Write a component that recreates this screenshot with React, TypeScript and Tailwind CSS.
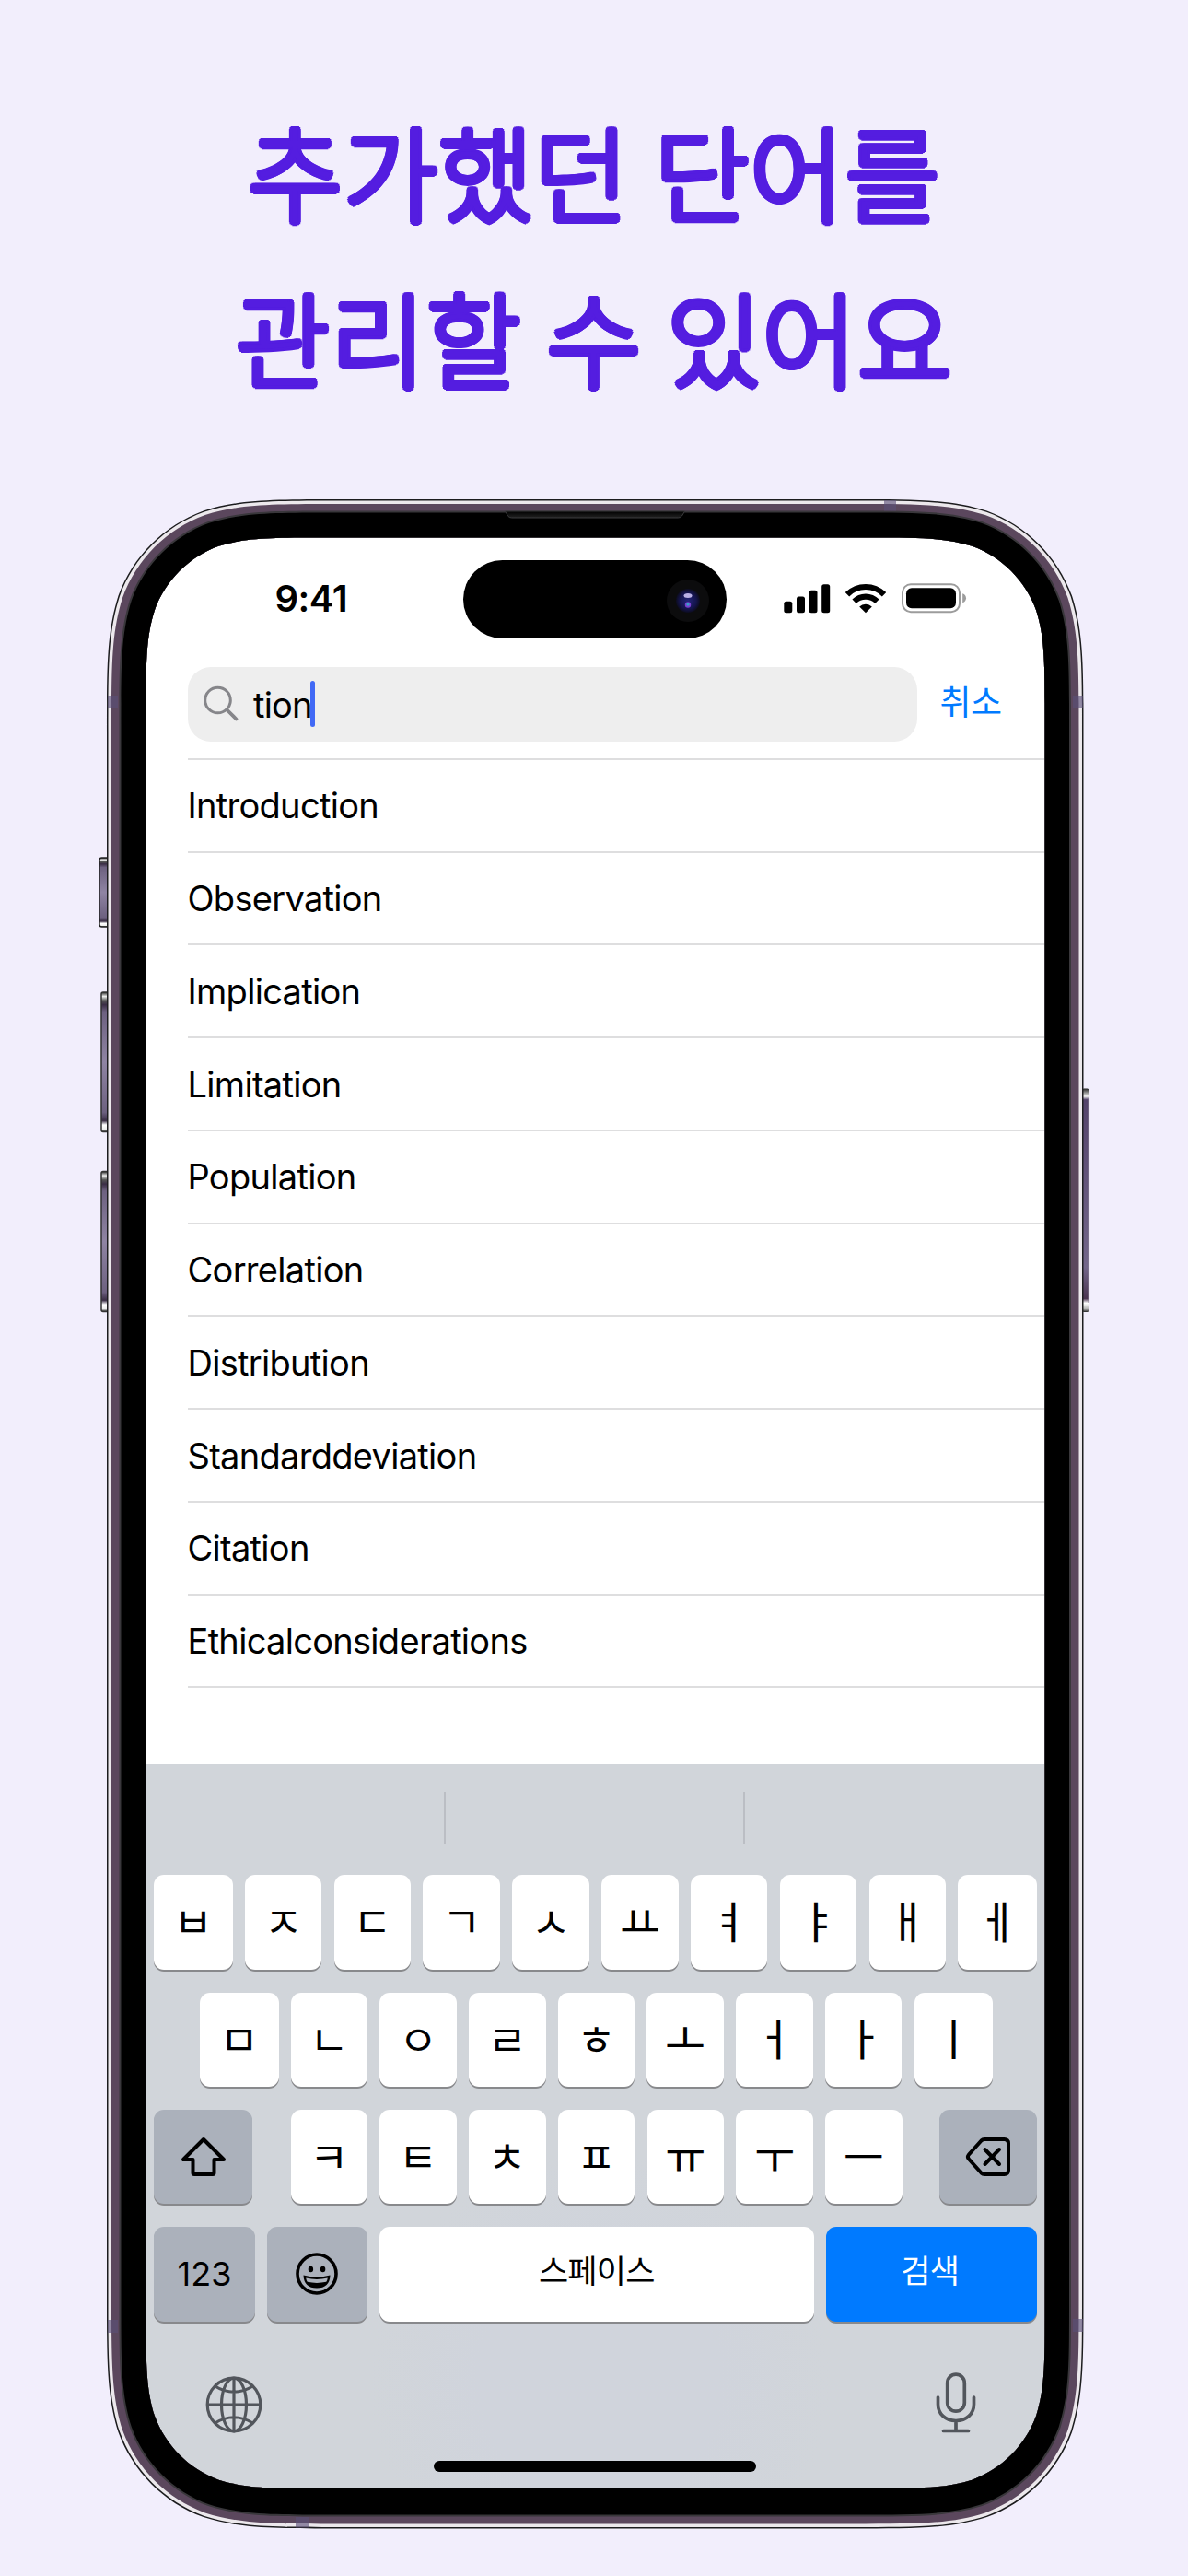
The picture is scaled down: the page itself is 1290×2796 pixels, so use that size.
import type { ReactNode } from "react";

const WORDS = [
  "Introduction",
  "Observation",
  "Implication",
  "Limitation",
  "Population",
  "Correlation",
  "Distribution",
  "Standarddeviation",
  "Citation",
  "Ethicalconsiderations",
];

/** Rounded rectangle with continuous corners. */
function squircle(x: number, y: number, w: number, h: number, r: number) {
  const a = 1.528665 * r;
  const b = 1.08849296 * r;
  const c = 0.86840694 * r;
  const d = 0.63149379 * r;
  const e = 0.07491139 * r;
  const f = 0.37282383 * r;
  const g = 0.16905956 * r;
  const R = x + w;
  const B = y + h;
  return [
    `M${x + a} ${y}H${R - a}`,
    `C${R - b} ${y} ${R - c} ${y} ${R - d} ${y + e}`,
    `C${R - f} ${y + g} ${R - g} ${y + f} ${R - e} ${y + d}`,
    `C${R} ${y + c} ${R} ${y + b} ${R} ${y + a}V${B - a}`,
    `C${R} ${B - b} ${R} ${B - c} ${R - e} ${B - d}`,
    `C${R - g} ${B - f} ${R - f} ${B - g} ${R - d} ${B - e}`,
    `C${R - c} ${B} ${R - b} ${B} ${R - a} ${B}H${x + a}`,
    `C${x + b} ${B} ${x + c} ${B} ${x + d} ${B - e}`,
    `C${x + f} ${B - g} ${x + g} ${B - f} ${x + e} ${B - d}`,
    `C${x} ${B - c} ${x} ${B - b} ${x} ${B - a}V${y + a}`,
    `C${x} ${y + b} ${x} ${y + c} ${x + e} ${y + d}`,
    `C${x + g} ${y + f} ${x + f} ${y + g} ${x + d} ${y + e}`,
    `C${x + c} ${y} ${x + b} ${y} ${x + a} ${y}Z`,
  ].join("");
}

const hole = squircle(42.5, 41.5, 976, 2117.5, 125);

function Bezel() {
  return (
    <svg
      className="pointer-events-none absolute inset-0 overflow-visible"
      width="1060"
      height="2203"
      viewBox="0 0 1060 2203"
      fillRule="evenodd"
    >
      <defs>
        <linearGradient id="side" x1="0" y1="0" x2="0" y2="1">
          <stop offset="0" stopColor="#222" />
          <stop offset="0.03" stopColor="#eee" />
          <stop offset="0.06" stopColor="#555" />
          <stop offset="0.09" stopColor="#3a2d45" />
          <stop offset="0.14" stopColor="#6d6180" />
          <stop offset="0.5" stopColor="#8f84a3" />
          <stop offset="0.86" stopColor="#6d6180" />
          <stop offset="0.92" stopColor="#3a2d45" />
          <stop offset="0.95" stopColor="#fff" />
          <stop offset="0.98" stopColor="#eee" />
          <stop offset="1" stopColor="#222" />
        </linearGradient>
        <linearGradient id="power" x1="0" y1="0" x2="0" y2="1">
          <stop offset="0" stopColor="#222" />
          <stop offset="0.02" stopColor="#999" />
          <stop offset="0.035" stopColor="#f4f4f4" />
          <stop offset="0.05" stopColor="#54436b" />
          <stop offset="0.8" stopColor="#73668a" />
          <stop offset="0.94" stopColor="#4a3350" />
          <stop offset="0.96" stopColor="#fff" />
          <stop offset="0.985" stopColor="#bbb" />
          <stop offset="1" stopColor="#222" />
        </linearGradient>
        <linearGradient id="ear" x1="0" y1="0" x2="0" y2="1">
          <stop offset="0" stopColor="#000" />
          <stop offset="1" stopColor="#222" />
        </linearGradient>
      </defs>
      <rect x="-8" y="389" width="11" height="75" rx="2.5" fill="url(#side)" stroke="#222" strokeWidth="1.5" />
      <rect x="-6" y="535" width="8" height="151.500" rx="2" fill="url(#side)" stroke="#333" strokeWidth="1.5" />
      <rect x="-6" y="729.500" width="8" height="152" rx="2" fill="url(#side)" stroke="#333" strokeWidth="1.500" />
      <rect x="1059" y="639.500" width="7.500" height="242.500" rx="2" fill="url(#power)" />
      <path d="M1066.300 650V872" stroke="#8d8796" strokeWidth="1.500" />
      <path d={squircle(0, 0, 1060.5, 2202.500, 166) + hole} fill="#1c1c1e" />
      <path d={squircle(1.5, 1.5, 1057.500, 2199.500, 164.500) + hole} fill="#ece8ec" />
      <path d={squircle(5, 5, 1050.500, 2192.500, 161) + hole} fill="#5b475d" />
      <path d={squircle(13.5, 12.5, 1033.500, 2177, 153) + hole} fill="#39373b" />
      <path d={squircle(15.5, 14.5, 1029.500, 2173, 151) + hole} fill="#000" />
      <path d="M432.500 13l3 5q1.500 2 4 2h181q2.500 0 4-2l3-5z" fill="url(#ear)" stroke="#3a3a3c" strokeWidth="1" />
      <g fill="#5a4f78" fillOpacity="0.62">
        <rect x="844" y="1" width="13" height="11.500" />
        <rect x="205" y="2190" width="14" height="11.500" />
        <rect x="1" y="213" width="11" height="13" />
        <rect x="1049" y="213" width="11" height="13" />
        <rect x="1" y="1976" width="11" height="14" />
        <rect x="1049" y="1975" width="11" height="14" />
      </g>
    </svg>
  );
}

function StatusBar() {
  return (
    <div className="relative flex h-[140.500px] items-start">
      <div className="ml-[140px] mt-[41.500px] w-[80px] text-[40px] font-semibold leading-[50px] tracking-[-0.5px]">
        9:41
      </div>
      <div className="ml-[124.500px] mt-[24px] flex h-[85px] w-[286px] items-center justify-end rounded-full bg-black pr-[19px]">
        <svg width="46" height="46" viewBox="-23 -23 46 46" className="mt-[3px]">
          <defs>
            <radialGradient id="lens">
              <stop offset="0" stopColor="#24247a" />
              <stop offset="0.7" stopColor="#14144c" />
              <stop offset="1" stopColor="#0c0c1e" />
            </radialGradient>
          </defs>
          <circle r="23" fill="#0c0c0d" />
          <circle r="13" fill="url(#lens)" />
          <ellipse cy="-5.500" rx="4.500" ry="2.500" fill="#b9b0e6" />
          <circle cy="4.500" r="3.200" fill="#7a3fd0" />
          <circle cy="4" r="1.700" fill="#38a0c8" />
        </svg>
      </div>
      <svg className="ml-[62px] mt-[50px]" width="51" height="32" viewBox="0 0 51 32">
        <rect x="0.300" y="18.800" width="9" height="12.500" rx="2.500" />
        <rect x="14" y="13.500" width="9" height="17.800" rx="2.500" />
        <rect x="27.500" y="6.800" width="9" height="24.500" rx="2.500" />
        <rect x="41.200" y="0.200" width="9" height="31.100" rx="2.500" />
      </svg>
      <svg className="ml-[16px] mt-[49px]" width="44" height="33" viewBox="0 0 44 33">
        <g fill="none" stroke="#000">
          <path d="M2 12.200A28.500 28.500 0 0 1 42 12.200" strokeWidth="6.200" />
          <path d="M9.600 19.800A17.600 17.600 0 0 1 34.400 19.800" strokeWidth="6.200" />
        </g>
        <path d="M22 32.200l-6.800-6.800a9.800 9.800 0 0 1 13.600 0z" />
      </svg>
      <svg className="ml-[17px] mt-[49px]" width="72" height="33" viewBox="0 0 72 33">
        <rect x="1" y="1.200" width="62" height="30" rx="9" fill="none" stroke="#9c9c9c" strokeWidth="2" />
        <rect x="5" y="5.200" width="54" height="22" rx="6" />
        <path d="M66.200 11.200c2.600.8 3.800 2.800 3.800 5s-1.200 4.200-3.800 5z" fill="#9c9c9c" />
      </svg>
    </div>
  );
}

function SearchBar() {
  return (
    <div className="flex h-[99px] items-start pl-[45px]">
      <div className="flex h-[81px] w-[792.500px] items-center rounded-[25px] bg-[#eeeeee] pl-[16px]">
        <svg width="40" height="40" viewBox="0 0 40 40" fill="none" stroke="#86868a" strokeLinecap="round">
          <circle cx="16.500" cy="16" r="13.800" strokeWidth="3" />
          <path d="M26.500 26.500L36.500 36.500" strokeWidth="3.800" />
        </svg>
        <span className="ml-[15.500px] pt-[2px] text-[38px] leading-[50px] tracking-[-0.800px]">tion</span>
        <span className="-ml-[1.500px] h-[50px] w-[5px] rounded-full bg-[#4169f5]" />
      </div>
      <div className="ml-[24.500px] mt-[10.500px] font-['Noto_Sans_CJK_KR',sans-serif] text-[37px] leading-[52px] tracking-[-0.500px] text-[#007aff]">
        취소
      </div>
    </div>
  );
}

function WordList() {
  return (
    <ul className="ml-[45px] h-[1092.500px] border-t-2 border-[#dededf]">
      {WORDS.map((w) => (
        <li
          key={w}
          className="flex h-[100.750px] items-center border-b-2 border-[#dededf] pt-[1px] text-[38px] tracking-[-0.700px]"
        >
          {w}
        </li>
      ))}
    </ul>
  );
}

function Key({ children, className }: { children: ReactNode; className: string }) {
  return (
    <div
      className={`flex h-[102.500px] shrink-0 items-center justify-center rounded-[11px] shadow-[0_2px_0_#88898c] ${className}`}
    >
      {children}
    </div>
  );
}

const VOWELS = "ㅕㅑㅐㅔㅓㅏㅣㅛㅗㅠㅜㅡ";

function LetterKey({ char, wide }: { char: string; wide?: boolean }) {
  const size = VOWELS.includes(char) ? "text-[48px] pb-[7px]" : "text-[46px] pb-[6px]";
  return (
    <Key className={`bg-white ${wide ? "w-[85.500px]" : "w-[83.500px]"}`}>
      <span className={`font-['Noto_Sans_CJK_KR',sans-serif] leading-[60px] ${size}`}>{char}</span>
    </Key>
  );
}

function Keyboard() {
  const top = [..."ㅂㅈㄷㄱㅅㅛㅕㅑㅐㅔ"];
  const home = [..."ㅁㄴㅇㄹㅎㅗㅓㅏㅣ"];
  const bottom = [..."ㅋㅌㅊㅍㅠㅜㅡ"];
  return (
    <div className="flex h-[786px] flex-col bg-[#d1d5da] bg-[radial-gradient(circle_at_492px_670px,#d0d4dc_0,#d0d4dc_130px,#d1d5da_250px)]">
      <div className="flex h-[120px] items-start pt-[29.500px]">
        <div className="ml-[323px] h-[56.500px] w-[2px] bg-[#bbbec4]" />
        <div className="ml-[323.500px] h-[56.500px] w-[2px] bg-[#bbbec4]" />
      </div>
      <div className="flex flex-col gap-[24.800px] px-[8.500px]">
        <div className="flex justify-between">
          {top.map((c, i) => (
            <LetterKey key={c} char={c} wide={i === 0 || i === 9} />
          ))}
        </div>
        <div className="flex justify-between pl-[50px] pr-[48px]">
          {home.map((c, i) => (
            <LetterKey key={c} char={c} wide={i === 0 || i === 8} />
          ))}
        </div>
        <div className="flex justify-between">
          <Key className="w-[106.500px] bg-[#abb1bb]">
            <svg
              className="ml-[2px]"
              width="50"
              height="44"
              viewBox="0 0 50 44"
              fill="none"
              stroke="#000"
              strokeWidth="4"
              strokeLinejoin="round"
            >
              <path d="M25 3L3 25h10.500v14.500q0 1.500 1.500 1.500h20q1.500 0 1.500-1.500V25H47z" />
            </svg>
          </Key>
          <div className="ml-[2px] flex w-[664px] justify-between">
            {bottom.map((c) => (
              <LetterKey key={c} char={c} />
            ))}
          </div>
          <Key className="w-[106.500px] bg-[#abb1bb]">
            <svg
              className="ml-[1px]"
              width="50"
              height="44"
              viewBox="0 0 50 44"
              fill="none"
              stroke="#000"
              strokeWidth="4"
              strokeLinejoin="round"
              strokeLinecap="round"
            >
              <path d="M21 3H42.500q4.500 0 4.500 4.500v29q0 4.500-4.500 4.500H21q-2 0-3.500-1.500L4 24.500q-2.200-2.500 0-5L17.500 4.500Q19 3 21 3z" />
              <path d="M21.500 14L37 30M37 14L21.500 30" />
            </svg>
          </Key>
        </div>
        <div className="flex justify-between">
          <Key className="w-[110px] bg-[#abb1bb] pb-[1px] text-[36px]">123</Key>
          <Key className="w-[109.500px] bg-[#abb1bb]">
            <svg width="46" height="46" viewBox="-23 -23 46 46">
              <circle r="21" fill="none" stroke="#000" strokeWidth="3.600" />
              <ellipse cx="-6.600" cy="-5" rx="2.700" ry="3.300" />
              <ellipse cx="6.600" cy="-5" rx="2.700" ry="3.300" />
              <path d="M-14.500 1.500Q0 5.500 14.500 1.500Q14 15.500 0 15.500Q-14 15.500-14.500 1.500z" />
              <path d="M-11.800 4.600Q0 7.300 11.800 4.600Q11.500 7 10.300 8.800Q0 11-10.300 8.800Q-11.500 7-11.800 4.600z" fill="#abb1bb" />
            </svg>
          </Key>
          <Key className="w-[472.500px] bg-white pb-[11px] font-['Noto_Sans_CJK_KR',sans-serif] text-[35px] tracking-[-0.800px]">
            스페이스
          </Key>
          <Key className="w-[229.500px] bg-[#007aff] pb-[11px] pr-[3px] font-['Noto_Sans_CJK_KR',sans-serif] text-[35px] tracking-[-0.800px] text-white">
            검색
          </Key>
        </div>
      </div>
      <div className="flex justify-between pl-[63px] pr-[75px] pt-[55px]">
        <svg className="mt-[3.500px]" width="64" height="64" viewBox="-32 -32 64 64" fill="none" stroke="#52565c" strokeWidth="3.200">
          <circle r="28.800" />
          <ellipse rx="13.500" ry="28.800" />
          <path d="M0-29V29M-29 0H29M-20.500-20Q0-7.500 20.500-20M-20.500 20Q0 7.500 20.500 20" />
        </svg>
        <svg width="44" height="66" viewBox="0 0 44 66" fill="none" stroke="#52565c" strokeWidth="3.700" strokeLinecap="round">
          <rect x="12.700" y="2.200" width="18.600" height="40" rx="9.300" />
          <path d="M2.500 27v7.500c0 10.500 8 18 19.500 18s19.500-7.500 19.500-18V27M22 52.500V63M8.500 63.500H35.500" />
        </svg>
      </div>
      <div className="mb-[18px] ml-[312.500px] mt-auto h-[12px] w-[350px] rounded-full bg-black" />
    </div>
  );
}

export default function App() {
  return (
    <div className="h-[2796px] w-[1290px] overflow-hidden bg-[#f2eefc] font-['Inter',sans-serif] text-black">
      <h1 className="flex h-[542px] flex-col items-center whitespace-nowrap pt-[94px] font-['Noto_Sans_CJK_KR',sans-serif] text-[112px] font-light leading-[180px] tracking-[0.5px] text-[#541de0] [word-spacing:2px] [text-shadow:3.5px_0_0_#541de0,3px_1.75px_0_#541de0,1.75px_3px_0_#541de0,0_3.5px_0_#541de0,-1.75px_3px_0_#541de0,-3px_1.75px_0_#541de0,-3.5px_0_0_#541de0,-3px_-1.75px_0_#541de0,-1.75px_-3px_0_#541de0,0_-3.5px_0_#541de0,1.75px_-3px_0_#541de0,3px_-1.75px_0_#541de0]">
        <span>추가했던 단어를</span>
        <span>관리할 수 있어요</span>
      </h1>
      <div className="relative ml-[116px] h-[2203px] w-[1060px] pl-[42.500px] pt-[41.500px]">
        <div className="flex h-[2117.500px] w-[976px] flex-col overflow-hidden rounded-[100px] bg-white">
          <StatusBar />
          <SearchBar />
          <WordList />
          <Keyboard />
        </div>
        <Bezel />
      </div>
    </div>
  );
}
